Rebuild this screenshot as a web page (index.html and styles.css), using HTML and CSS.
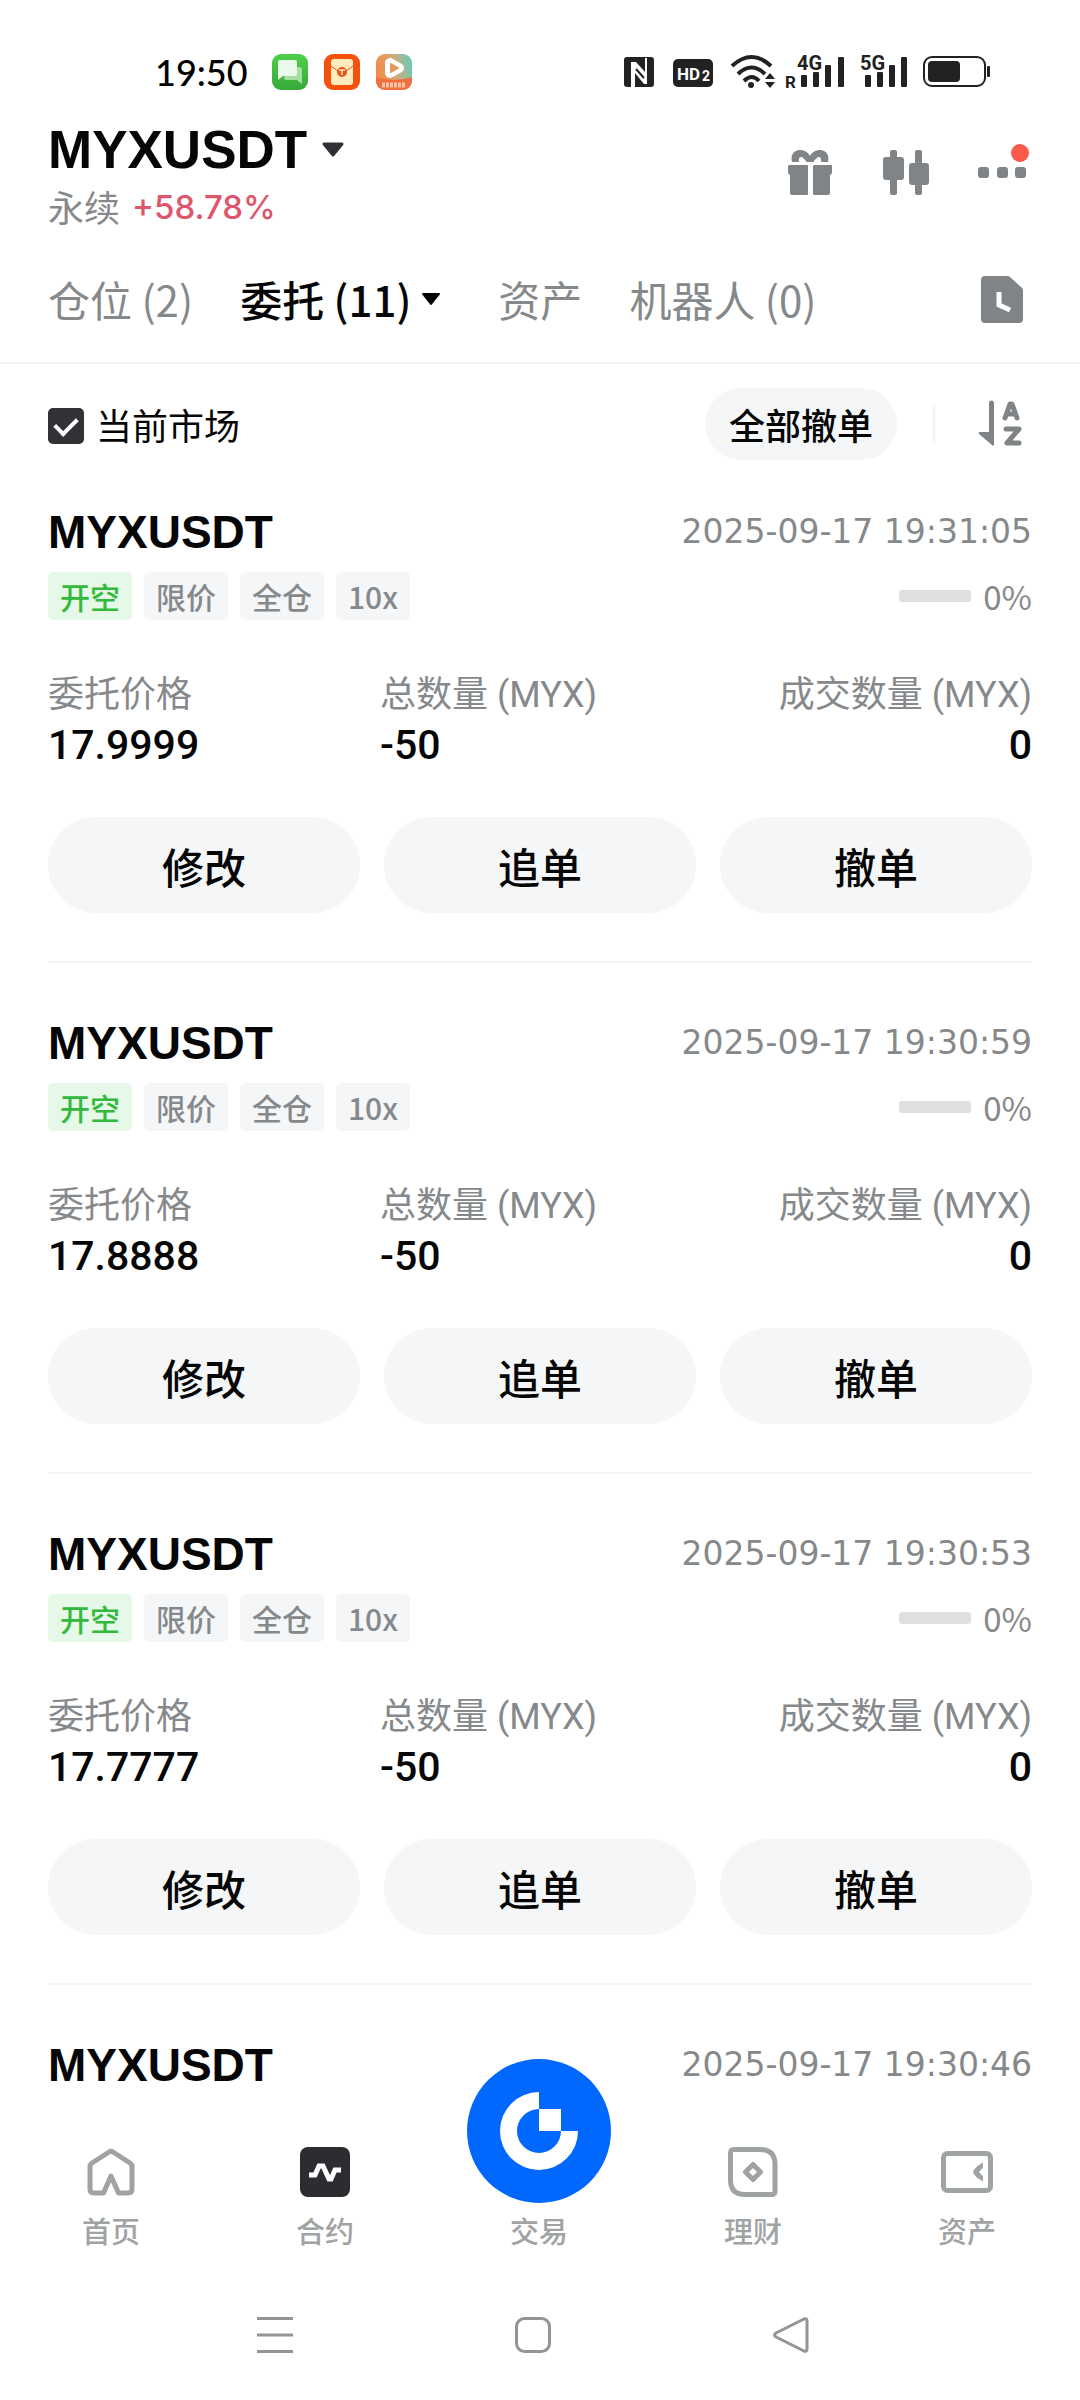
FILE: index.html
```html
<!DOCTYPE html>
<html lang="zh-CN">
<head>
<meta charset="utf-8">
<meta name="viewport" content="width=device-width, initial-scale=1">
<title>MYXUSDT 委托</title>
<link rel="stylesheet" href="styles.css">
</head>
<body>
<div class="app">
  <div class="status">
    <div class="status-left">
      <time class="clock">19:50</time>
      <svg width="36" height="36" viewBox="0 0 36 36" aria-hidden="true">
        <defs><linearGradient id="msg" x1="0" y1="0" x2="0" y2="1"><stop offset="0" stop-color="#4fcf4a"/><stop offset="1" stop-color="#35a93a"/></linearGradient></defs>
        <rect width="36" height="36" rx="9" fill="url(#msg)"/>
        <path d="M14 13h14a2 2 0 0 1 2 2v15l-5-4H14a2 2 0 0 1-2-2z" fill="#a5e0a0"/>
        <path d="M8 6h15a2 2 0 0 1 2 2v12a2 2 0 0 1-2 2H11l-5 4V8a2 2 0 0 1 2-2z" fill="#eaf9e8"/>
      </svg>
      <svg width="36" height="36" viewBox="0 0 36 36" aria-hidden="true">
        <rect width="36" height="36" rx="9" fill="#f4520c"/>
        <rect x="7" y="5" width="22" height="26" rx="3" fill="#ffebbd"/>
        <path d="M7 12l7 5h8l7-5" fill="none" stroke="#e8541a" stroke-width="1"/>
        <circle cx="18" cy="18" r="5" fill="#e8541a"/>
        <path d="M15 16h6M18 16v5" stroke="#ffebbd" stroke-width="1.500"/>
      </svg>
      <svg width="36" height="36" viewBox="0 0 36 36" aria-hidden="true">
        <defs>
          <linearGradient id="vid" x1="0" y1=".4" x2="1" y2=".2"><stop offset="0" stop-color="#f28a45"/><stop offset=".5" stop-color="#d9a878"/><stop offset="1" stop-color="#62cdb8"/></linearGradient>
          <clipPath id="vidc"><rect width="36" height="36" rx="9"/></clipPath>
        </defs>
        <g clip-path="url(#vidc)">
          <rect width="36" height="36" fill="url(#vid)"/>
          <path d="M0 23q18 6 36 0v13H0z" fill="#f0703f"/>
          <path d="M14 9v10l9-5z" fill="#fff" stroke="#fff" stroke-width="10" stroke-linejoin="round"/>
          <path d="M15 10v8l7-4z" fill="#e39a5c" stroke="#e39a5c" stroke-width="2" stroke-linejoin="round"/>
          <path d="M6 31h24" stroke="#fbc3a6" stroke-width="5" stroke-dasharray="3 1"/>
        </g>
      </svg>
    </div>
    <svg class="status-right" width="372" height="40" viewBox="620 52 372 40" role="img" aria-label="NFC、HD2、Wi-Fi、4G、5G、电池">
      <g fill="#222">
        <rect x="624" y="57" width="30" height="30" rx="3"/>
        <path d="M631 87V62l5 0 9 10V58h2v26h-3l-9-11v14z" fill="#fff"/>
        <path d="M636 69l8 9" stroke="#222" stroke-width="2"/>
        <rect x="673" y="59" width="40" height="28" rx="5"/>
        <text x="677" y="80" class="hd">HD</text>
        <text x="702" y="81" class="hd-sub">2</text>
        <g fill="none" stroke="#222" stroke-width="4">
          <path d="M732 66q19.500-18 39 0"/><path d="M738 74q13.500-13 27 0"/><path d="M744 81q8-8 15 0"/>
        </g>
        <circle cx="751" cy="85" r="3"/>
        <path d="M765 79l5-6 5 6zM765 82h10l-5 6z"/>
        <text x="785" y="88" class="sim">R</text>
        <rect x="801" y="75" width="6" height="12" rx="1"/><rect x="813" y="72" width="6" height="15" rx="1"/><rect x="825" y="65" width="6" height="22" rx="1"/><rect x="838" y="57" width="6" height="30" rx="1"/>
        <text x="797" y="70" class="net">4G</text>
        <rect x="865" y="75" width="6" height="12" rx="1"/><rect x="877" y="72" width="6" height="15" rx="1"/><rect x="889" y="65" width="6" height="22" rx="1"/><rect x="901" y="57" width="6" height="30" rx="1"/>
        <text x="860" y="70" class="net">5G</text>
        <rect x="924" y="57" width="61" height="29" rx="8" fill="none" stroke="#222" stroke-width="2"/>
        <rect x="928" y="61" width="32" height="21" rx="4"/>
        <rect x="987" y="66" width="3" height="11" rx="1"/>
      </g>
    </svg>
  </div>

  <header class="head">
    <div class="pair">
      <h1 class="pair-name"><button class="pair-btn" type="button">MYXUSDT
        <svg width="24" height="16" viewBox="0 0 24 16" aria-hidden="true"><path d="M3 2h18l-9 11z" fill="#303236" stroke="#303236" stroke-width="3" stroke-linejoin="round"/></svg>
      </button></h1>
      <p class="pair-sub">永续<span class="change">+58.78%</span></p>
    </div>
    <div class="head-actions">
      <button class="icon-btn" type="button" aria-label="礼物">
        <svg width="48" height="48" viewBox="0 0 48 48" fill="#808486" aria-hidden="true">
          <path d="M3 17h18a1 1 0 0 1 1 1v28a1 1 0 0 1-1 1H6a2 2 0 0 1-2-2V27a3 3 0 0 1-2-3v-6zM28 17h17a1 1 0 0 1 1 1v6a3 3 0 0 1-2 3v18a2 2 0 0 1-2 2H28a1 1 0 0 1-1-1V18z"/>
          <path d="M6 14C4 6 9 2 14 2c4 0 8 2 10 6 2-4 6-6 10-6 5 0 10 4 8 12z"/>
          <path d="M13 15q-1-7 3-6 3 2 5 6zM35 15q1-7-3-6-3 2-5 6z" fill="#fff"/>
        </svg>
      </button>
      <button class="icon-btn" type="button" aria-label="K线">
        <svg width="48" height="48" viewBox="0 0 48 48" fill="#808486" aria-hidden="true">
          <rect x="8" y="2" width="7" height="45" rx="2"/><rect x="1" y="9" width="21" height="23" rx="3"/>
          <rect x="33" y="2" width="7" height="45" rx="2"/><rect x="27" y="15" width="20" height="22" rx="3"/>
        </svg>
      </button>
      <button class="icon-btn" type="button" aria-label="更多">
        <svg width="48" height="48" viewBox="0 0 48 48" fill="#808486" aria-hidden="true">
          <rect x="0" y="19" width="11" height="11" rx="3"/><rect x="19" y="19" width="11" height="11" rx="3"/><rect x="37" y="19" width="11" height="11" rx="3"/>
        </svg>
        <span class="badge"></span>
      </button>
    </div>
  </header>

  <nav class="tabs">
    <button class="tab" type="button">仓位 (2)</button>
    <button class="tab tab-on" type="button">委托 (11)
      <svg width="32" height="16" viewBox="0 0 32 16" aria-hidden="true"><path d="M4 3h16l-8 10z" fill="#000" stroke="#000" stroke-width="2" stroke-linejoin="round"/></svg>
    </button>
    <button class="tab" type="button">资产</button>
    <button class="tab" type="button">机器人 (0)</button>
    <button class="icon-btn tab-end" type="button" aria-label="历史">
      <svg width="48" height="48" viewBox="0 0 48 48" aria-hidden="true">
        <path d="M7 1h22a4 4 0 0 1 3 1l12 11a4 4 0 0 1 1 3v28a4 4 0 0 1-4 4H7a4 4 0 0 1-4-4V5a4 4 0 0 1 4-4z" fill="#808486"/>
        <path d="M21 17v13l11 5" fill="none" stroke="#fff" stroke-width="5"/>
      </svg>
    </button>
  </nav>

  <div class="filter">
    <label class="check"><input class="check-box" type="checkbox" checked>当前市场</label>
    <button class="pill" type="button">全部撤单</button>
    <span class="sep"></span>
    <button class="icon-btn" type="button" aria-label="排序">
      <svg width="44" height="48" viewBox="0 0 44 48" aria-hidden="true">
        <path d="M11 3a2 2 0 0 1 5 0v41a1 1 0 0 1-2 1L1 34q-1-2 1-2h9z" fill="#808486"/>
        <path d="M27 18l5-14h2l5 14M29 14h8M28 29h13l-12 14h12" fill="none" stroke="#808486" stroke-width="5" stroke-linejoin="round" stroke-linecap="round"/>
      </svg>
    </button>
  </div>

  <main class="orders">
    <article class="order">
      <div class="row"><h2 class="symbol">MYXUSDT</h2><time class="when">2025-09-17 19:31:05</time></div>
      <div class="row row-tags">
        <div class="tags"><span class="tag tag-short">开空</span><span class="tag">限价</span><span class="tag">全仓</span><span class="tag">10x</span></div>
        <div class="fill"><span class="bar"></span>0%</div>
      </div>
      <dl class="facts">
        <div><dt>委托价格</dt><dd>17.9999</dd></div>
        <div><dt>总数量 (MYX)</dt><dd>-50</dd></div>
        <div class="end"><dt>成交数量 (MYX)</dt><dd>0</dd></div>
      </dl>
      <div class="actions"><button class="act" type="button">修改</button><button class="act" type="button">追单</button><button class="act" type="button">撤单</button></div>
    </article>
    <article class="order">
      <div class="row"><h2 class="symbol">MYXUSDT</h2><time class="when">2025-09-17 19:30:59</time></div>
      <div class="row row-tags">
        <div class="tags"><span class="tag tag-short">开空</span><span class="tag">限价</span><span class="tag">全仓</span><span class="tag">10x</span></div>
        <div class="fill"><span class="bar"></span>0%</div>
      </div>
      <dl class="facts">
        <div><dt>委托价格</dt><dd>17.8888</dd></div>
        <div><dt>总数量 (MYX)</dt><dd>-50</dd></div>
        <div class="end"><dt>成交数量 (MYX)</dt><dd>0</dd></div>
      </dl>
      <div class="actions"><button class="act" type="button">修改</button><button class="act" type="button">追单</button><button class="act" type="button">撤单</button></div>
    </article>
    <article class="order">
      <div class="row"><h2 class="symbol">MYXUSDT</h2><time class="when">2025-09-17 19:30:53</time></div>
      <div class="row row-tags">
        <div class="tags"><span class="tag tag-short">开空</span><span class="tag">限价</span><span class="tag">全仓</span><span class="tag">10x</span></div>
        <div class="fill"><span class="bar"></span>0%</div>
      </div>
      <dl class="facts">
        <div><dt>委托价格</dt><dd>17.7777</dd></div>
        <div><dt>总数量 (MYX)</dt><dd>-50</dd></div>
        <div class="end"><dt>成交数量 (MYX)</dt><dd>0</dd></div>
      </dl>
      <div class="actions"><button class="act" type="button">修改</button><button class="act" type="button">追单</button><button class="act" type="button">撤单</button></div>
    </article>
    <article class="order">
      <div class="row"><h2 class="symbol">MYXUSDT</h2><time class="when">2025-09-17 19:30:46</time></div>
    </article>
  </main>

  <nav class="dock">
    <a class="dock-item" href="#home">
      <svg width="52" height="52" viewBox="0 0 52 52" fill="none" stroke="#a0a3a4" stroke-width="5" stroke-linejoin="round" aria-hidden="true">
        <path d="M5 20.500q0-2 2-3.500L24 6q2-1.500 4 0l17 11q2 1.500 2 3.500V43q0 4-4 4H33.500L26 30l-7.500 17H9q-4 0-4-4z"/>
      </svg>首页</a>
    <a class="dock-item" href="#futures">
      <svg width="52" height="52" viewBox="0 0 52 52" aria-hidden="true">
        <rect x="1" y="1" width="50" height="50" rx="8" fill="#2b2d30"/>
        <path d="M10 29h6l4-9h4l6 13h2l4-9h6" fill="none" stroke="#fff" stroke-width="5"/>
      </svg>合约</a>
    <a class="dock-item" href="#trade">
      <svg class="ball" width="144" height="144" viewBox="0 0 144 144" aria-hidden="true">
        <circle cx="72" cy="72" r="72" fill="#0068ff"/>
        <path d="M72 33a39 39 0 1 0 39 39H94a22 22 0 1 1-22-22z" fill="#fff"/>
        <path d="M72 50h22v22H72z" fill="#fff"/>
      </svg>交易</a>
    <a class="dock-item" href="#earn">
      <svg width="52" height="52" viewBox="0 0 52 52" fill="none" stroke="#a0a3a4" stroke-width="5" aria-hidden="true">
        <path d="M7 3.500h26q15 0 15 15V45q0 3.500-3.500 3.500H18q-14.500 0-14.500-14.500V7q0-3.500 3.500-3.500z"/>
        <path d="M26 18.500l7.500 7.500-7.500 7.500-7.500-7.500z" stroke-linejoin="round"/>
      </svg>理财</a>
    <a class="dock-item" href="#assets">
      <svg width="52" height="52" viewBox="0 0 52 52" fill="none" stroke="#a0a3a4" stroke-width="5" aria-hidden="true">
        <rect x="2.500" y="7.500" width="47" height="37" rx="4"/>
        <path d="M42 16.500v5L38 26l4 4.500v5q-9-5-10-9.500 1-4.500 10-9.500z" fill="#a0a3a4" stroke="none"/>
      </svg>资产</a>
  </nav>

  <div class="sysbar">
    <button class="icon-btn" type="button" aria-label="最近任务"><svg width="36" height="36" viewBox="0 0 36 36" stroke="#949494" stroke-width="3"><path d="M0 1.500h36M0 18h36M0 34.500h36"/></svg></button>
    <button class="icon-btn" type="button" aria-label="主屏幕"><svg width="36" height="36" viewBox="0 0 36 36" fill="none" stroke="#949494" stroke-width="3"><rect x="1.500" y="1.500" width="33" height="33" rx="8"/></svg></button>
    <button class="icon-btn" type="button" aria-label="返回"><svg width="36" height="36" viewBox="0 0 36 36" fill="none" stroke="#949494" stroke-width="3" stroke-linejoin="round"><path d="M3 16L31 2q3-1 3 2v28q0 3-3 2L3 20q-3-2 0-4z"/></svg></button>
  </div>
</div>
</body>
</html>
```
FILE: styles.css
```css
* { box-sizing: border-box; }

body {
  margin: 0;
  background: #fff;
  color: #060606;
  font-family: "Noto Sans CJK SC", "Noto Sans", sans-serif;
}

h1, h2, p, dl, dd { margin: 0; }
svg { display: block; flex: none; }

button {
  margin: 0;
  padding: 0;
  border: 0;
  background: none;
  color: inherit;
  font: inherit;
  cursor: pointer;
}

.app {
  display: flex;
  flex-direction: column;
  height: 100vh;
}

.icon-btn { position: relative; display: block; flex: none; }

/* Status bar */
.status {
  display: flex;
  justify-content: space-between;
  align-items: center;
  padding: 52px 88px 24px 155px;
}
.status-left { display: flex; align-items: center; gap: 16px; }
.clock {
  margin-right: 8px;
  font: 500 36px/40px Lato, sans-serif;
  color: #000;
}
.hd { font: 700 17px "Roboto", sans-serif; fill: #fff; }
.hd-sub { font: 700 14px "Roboto", sans-serif; fill: #fff; }
.sim { font: 700 17px "Roboto", sans-serif; }
.net {
  font: 700 20px "Roboto", sans-serif;
  paint-order: stroke;
  stroke: #fff;
  stroke-width: 2px;
}

/* Pair heading */
.head {
  display: flex;
  justify-content: space-between;
  align-items: flex-start;
  padding: 6px 54px 0 48px;
}
.pair-name { font: 700 53px/56px "Liberation Sans", Arial, sans-serif; }
.pair-btn { display: flex; align-items: center; gap: 14px; }
.pair-sub {
  display: flex;
  gap: 12px;
  margin-top: 4px;
  font-size: 36px;
  line-height: 48px;
  color: #86898b;
}
.change {
  font: 500 33px/50px Inter, Arial, sans-serif;
  color: #de566b;
}
.head-actions { display: flex; gap: 48px; padding-top: 26px; }
.badge {
  position: absolute;
  top: -4px;
  right: -3px;
  width: 18px;
  height: 18px;
  border-radius: 50%;
  background: #fb5a4b;
}

/* Tabs */
.tabs {
  display: flex;
  align-items: center;
  gap: 47px;
  padding: 35px 54px 31px 48px;
  border-bottom: 2px solid #f3f4f5;
  font-size: 42px;
  line-height: 64px;
  color: #86898b;
}
.tab { display: flex; align-items: center; gap: 8px; white-space: nowrap; }
.tab-on { color: #060606; font-weight: 500; }
.tab-end { margin-left: auto; }

/* Filter row */
.filter {
  display: flex;
  align-items: center;
  padding: 24px 58px 0 48px;
}
.check {
  display: flex;
  align-items: center;
  gap: 12px;
  margin-right: auto;
  font-size: 36px;
  line-height: 48px;
}
.check-box {
  appearance: none;
  width: 36px;
  height: 36px;
  margin: 4px 0 0;
  border-radius: 5px;
  background: #303236;
  display: grid;
  place-items: center;
}
.check-box:checked::before {
  content: "";
  width: 18px;
  height: 10px;
  border: solid #fff;
  border-width: 0 0 4px 4px;
  transform: translateY(-2px) rotate(-45deg);
}
.pill {
  height: 72px;
  padding: 0 24px;
  border-radius: 36px;
  background: #f4f6f8;
  font-size: 36px;
  font-weight: 500;
}
.sep {
  width: 2px;
  height: 36px;
  margin: 0 43px 0 36px;
  background: #f0f1f2;
}

/* Orders */
.orders {
  flex: 1;
  min-height: 0;
  overflow: hidden;
  padding: 0 48px;
}
.order { padding: 48px 0; border-bottom: 2px solid #f3f4f5; }
.order + .order { padding-top: 56px; }
.row { display: flex; justify-content: space-between; align-items: center; }
.row-tags { margin-top: 16px; }
.symbol { font: 700 46px/48px "Liberation Sans", Arial, sans-serif; }
.when {
  font: 400 33px/48px "DejaVu Sans", sans-serif;
  color: #86898b;
}
.tags { display: flex; gap: 12px; }
.tag {
  padding: 0 12px;
  border-radius: 5px;
  background: #f4f6f8;
  color: #86898b;
  font-size: 30px;
  line-height: 48px;
  font-weight: 500;
}
.tag-short { background: #e6f8e8; color: #33b93c; }
.fill {
  display: flex;
  align-items: center;
  gap: 12px;
  font-size: 33px;
  line-height: 48px;
  color: #86898b;
}
.bar { width: 72px; height: 12px; border-radius: 3px; background: #dedfe0; }
.facts {
  display: grid;
  grid-template-columns: repeat(3, 1fr);
  gap: 12px;
  margin-top: 49px;
  font-family: Roboto, "Noto Sans CJK SC", sans-serif;
}
.facts dt { font-size: 36px; line-height: 52px; color: #86898b; }
.facts dd { font-size: 41px; line-height: 48px; font-weight: 500; }
.end { text-align: right; }
.actions {
  display: grid;
  grid-template-columns: repeat(3, 1fr);
  gap: 24px;
  margin-top: 48px;
}
.act {
  height: 96px;
  border-radius: 48px;
  background: #f4f6f8;
  font-size: 42px;
  font-weight: 500;
}

/* Bottom navigation */
.dock {
  display: grid;
  grid-template-columns: repeat(5, 1fr);
  height: 175px;
  padding: 0 6px 20px 4px;
  background: #fff;
}
.dock-item {
  position: relative;
  display: flex;
  flex-direction: column;
  align-items: center;
  justify-content: flex-end;
  gap: 12px;
  color: #a0a3a4;
  font-size: 29px;
  font-weight: 500;
  line-height: 40px;
  text-decoration: none;
}
.ball { position: absolute; top: -36px; left: calc(50% - 72px); }

.sysbar {
  display: flex;
  justify-content: center;
  align-items: center;
  gap: 222px;
  height: 130px;
  padding-right: 14px;
}
```
